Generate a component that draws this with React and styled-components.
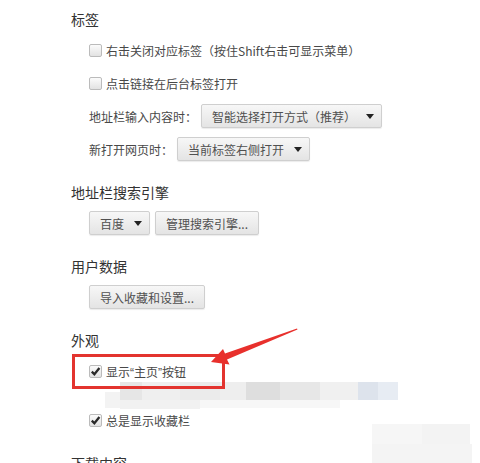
import React from 'react'
import styled, { createGlobalStyle } from 'styled-components'

const GlobalStyle = createGlobalStyle`
    html, body {
        margin: 0;
        padding: 0;
        background: #ffffff;
    }

    body {
        font-family: "Noto Sans CJK SC", "Noto Sans", sans-serif;
        color: #444444;
    }
`

const Page = styled.div`
    position: relative;
    width: 480px;
    height: 463px;
    overflow: hidden;
    background: #ffffff;
    padding: 9px 0 0 71px;
    box-sizing: border-box;
`

const Section = styled.section`
    display: flex;
    flex-direction: column;
    gap: 9px;
    margin-bottom: 21px;
`

const Heading = styled.h3`
    margin: 0;
    height: 20px;
    line-height: 20px;
    font-size: 14px;
    font-weight: 400;
    color: #333333;
`

const Items = styled.div`
    display: flex;
    flex-direction: column;
    gap: 9px;
    padding-left: 18px;
`

const Row = styled.div`
    display: flex;
    align-items: center;
    gap: ${(p) => p.$gap ?? 4}px;
    height: 24px;
    font-size: 12px;
    margin-top: ${(p) => p.$offset ?? 0}px;
`

const Box = styled.span`
    display: inline-flex;
    align-items: center;
    justify-content: center;
    width: 13px;
    height: 13px;
    box-sizing: border-box;
    border: 1px solid #bbbbbb;
    border-radius: 2px;
    background: linear-gradient(#fbfbfb, #e2e2e2);
    margin: 0 4px 0 0;
    flex: none;
`

const Label = styled.span`
    white-space: nowrap;
    color: #484848;
`

const Quote = styled.span`
    font-family: "Liberation Sans", Arial, sans-serif;
`

const Button = styled.button`
    display: inline-flex;
    align-items: center;
    gap: 10px;
    height: 24px;
    padding: 0 ${(p) => (p.$caret ? 7 : 10)}px 0 10px;
    font-family: inherit;
    font-size: 12px;
    color: #505050;
    border: 1px solid #cfcfcf;
    border-radius: 2px;
    background: linear-gradient(#f7f7f7, #e4e4e4);
    box-shadow: 0 1px 1px rgba(0, 0, 0, 0.08);
    white-space: nowrap;
    cursor: pointer;
`

const Caret = styled.span`
    width: 0;
    height: 0;
    border-left: 4px solid transparent;
    border-right: 4px solid transparent;
    border-top: 5px solid #222;
    margin-top: 1px;
`

const ButtonRow = styled.div`
    display: flex;
    gap: 5px;
    padding-left: 18px;
`

const Overlay = styled.svg`
    position: absolute;
    top: 0;
    left: 0;
    pointer-events: none;
`

const Check = ({ checked }) => (
    <Box>
        {checked && (
            <svg width="11" height="11" viewBox="0 0 11 11">
                <path d="M1.8 5.6 L4.4 8.2 L9.4 2" fill="none" stroke="#2a2a2a" strokeWidth="2.3" />
            </svg>
        )}
    </Box>
)

const Checkbox = ({ checked, children, offset }) => (
    <Row $gap={0} $offset={offset}>
        <Check checked={checked} />
        <Label>{children}</Label>
    </Row>
)

const Select = ({ label, value }) => (
    <Row $gap={4}>
        <Label>{label}</Label>
        <Button $caret>
            {value}
            <Caret />
        </Button>
    </Row>
)

// pixelated blur + annotation drawn over the page
const blur = [
    [120, 382, 22, 18, '#e6e6e6'],
    [142, 382, 38, 18, '#efefef'],
    [180, 382, 40, 18, '#ebebeb'],
    [220, 382, 26, 18, '#eeeeee'],
    [246, 382, 34, 18, '#dedede'],
    [280, 382, 40, 18, '#e7e7e7'],
    [320, 382, 38, 18, '#f0f0f0'],
    [358, 382, 20, 18, '#dde3ec'],
    [378, 382, 20, 18, '#e7ecf3'],
    [105, 392, 15, 16, '#f3f3f3'],
    [120, 400, 80, 9, '#f1f1f1'],
    [200, 400, 140, 8, '#f7f7f7'],
    [372, 424, 50, 20, '#f6f6f6'],
    [422, 424, 48, 20, '#f3f3f3'],
    [372, 444, 100, 19, '#f4f4f4']
]

const Annotation = () => (
    <Overlay width="480" height="463" viewBox="0 0 480 463">
        {blur.map(([x, y, w, h, c], i) => (
            <rect key={i} x={x} y={y} width={w} height={h} fill={c} />
        ))}
        <rect x="73.5" y="355.5" width="150" height="32" fill="none" stroke="#e3342f" strokeWidth="3" />
        <polygon
            points="211,362 223,349 225,353.5 297,328.5 297.5,329.5 227,359.5 229.5,364.5"
            fill="#e8302c"
        />
    </Overlay>
)

const App = () => {
    return (
        <>
            <GlobalStyle />
            <Page>
                <Section>
                    <Heading>标签</Heading>
                    <Items>
                        <Checkbox>右击关闭对应标签（按住Shift右击可显示菜单）</Checkbox>
                        <Checkbox>点击链接在后台标签打开</Checkbox>
                        <Select label="地址栏输入内容时：" value="智能选择打开方式（推荐）" />
                        <Select label="新打开网页时：" value="当前标签右侧打开" />
                    </Items>
                </Section>

                <Section>
                    <Heading>地址栏搜索引擎</Heading>
                    <ButtonRow>
                        <Button $caret>
                            百度
                            <Caret />
                        </Button>
                        <Button>管理搜索引擎...</Button>
                    </ButtonRow>
                </Section>

                <Section>
                    <Heading>用户数据</Heading>
                    <ButtonRow>
                        <Button>导入收藏和设置...</Button>
                    </ButtonRow>
                </Section>

                <Section>
                    <Heading>外观</Heading>
                    <Items>
                        <Checkbox checked>
                            显示<Quote>“</Quote>主页<Quote>”</Quote>按钮
                        </Checkbox>
                        <Checkbox checked offset={16}>
                            总是显示收藏栏
                        </Checkbox>
                    </Items>
                </Section>

                <Section>
                    <Heading>下载内容</Heading>
                </Section>

                <Annotation />
            </Page>
        </>
    )
}

export default App
